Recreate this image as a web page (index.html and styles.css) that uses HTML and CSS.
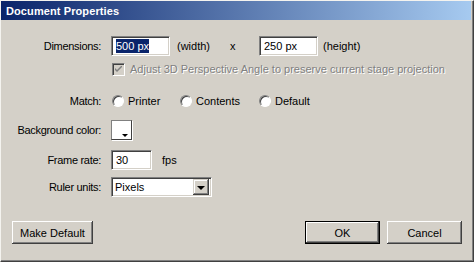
FILE: index.html
```html
<!DOCTYPE html>
<html>
<head>
    <title>Document Properties</title>
    <meta name="viewport" content="width=device-width, initial-scale=1">
    <link rel="stylesheet" href="styles.css">
</head>
<body>

<div class="window">
    <div class="titlebar">
        <span class="title">Document Properties</span>
    </div>

    <div class="content">
        <div class="row row-dim">
            <span class="label">Dimensions:</span>
            <div class="field field-dim"><span class="selected">500 px</span></div>
            <span class="note note-width">(width)</span>
            <span class="times">x</span>
            <div class="field field-dim">250 px</div>
            <span class="note note-height">(height)</span>
        </div>

        <div class="row row-check">
            <span class="label"></span>
            <span class="checkbox">
                <svg width="7" height="7" viewBox="0 0 7 7">
                    <path d="M0 2 L0 4 L2 6 L7 1 L7 -1 L2 4 Z" fill="#808080"/>
                </svg>
            </span>
            <span class="disabled">Adjust 3D Perspective Angle to preserve current stage projection</span>
        </div>

        <div class="row row-match">
            <span class="label">Match:</span>
            <span class="option option-printer"><span class="radio"></span>Printer</span>
            <span class="option option-contents"><span class="radio"></span>Contents</span>
            <span class="option"><span class="radio"></span>Default</span>
        </div>

        <div class="row row-bg">
            <span class="label">Background color:</span>
            <span class="swatch"><span class="swatch-arrow"></span></span>
        </div>

        <div class="row row-fps">
            <span class="label">Frame rate:</span>
            <div class="field field-fps">30</div>
            <span class="note note-fps">fps</span>
        </div>

        <div class="row row-ruler">
            <span class="label">Ruler units:</span>
            <div class="field select">
                <span class="select-text">Pixels</span>
                <span class="select-button"><span class="arrow"></span></span>
            </div>
        </div>
    </div>

    <div class="buttons">
        <button class="button button-wide">Make Default</button>
        <span class="spacer"></span>
        <span class="default-ring"><button class="button">OK</button></span>
        <button class="button">Cancel</button>
    </div>
</div>

</body>
</html>
```

FILE: styles.css
```css
html, body {
    margin: 0px;
    padding: 0px;
    background-color: #d4d0c8;
}

body {
    font-family: "Liberation Sans", Arial, sans-serif;
    font-size: 11px;
    color: #000000;
}

.window {
    width: 474px;
    height: 262px;
    box-sizing: border-box;
    border-top: 1px solid #f4f3ef;
    border-left: 1px solid #f4f3ef;
    border-right: 1px solid #404040;
    border-bottom: 1px solid #404040;
    box-shadow: inset -1px -1px 0px #808080;
    padding: 0px 2px 2px 0px;
    display: flex;
    flex-direction: column;
}

.titlebar {
    height: 19px;
    background: linear-gradient(to right, #0a246a, #a6caf0);
    display: flex;
    align-items: center;
    padding-left: 5px;
}

.title {
    color: #ffffff;
    font-weight: bold;
    font-size: 11px;
    letter-spacing: 0.1px;
}

.content {
    display: flex;
    flex-direction: column;
    flex: 1;
}

.row {
    display: flex;
    align-items: center;
}

.label {
    width: 100px;
    margin-right: 10px;
    text-align: right;
    letter-spacing: -0.3px;
    flex-shrink: 0;
}

.row-dim   { margin-top: 16px; height: 20px; }
.row-check { margin-top: 6px;  height: 14px; }
.row-match { margin-top: 18px; height: 14px; }
.row-bg    { margin-top: 12px; height: 20px; }
.row-fps   { margin-top: 10px; height: 20px; }
.row-ruler { margin-top: 7px;  height: 20px; }

/* sunken text fields */
.field {
    box-sizing: border-box;
    height: 20px;
    background-color: #ffffff;
    border: 1px solid;
    border-color: #808080 #ffffff #ffffff #808080;
    box-shadow: inset 1px 1px 0px #404040, inset -1px -1px 0px #d4d0c8;
    padding: 0px 4px;
    display: flex;
    align-items: center;
}

.field-dim {
    width: 59px;
}

.field-fps {
    width: 41px;
}

.selected {
    background-color: #0a246a;
    color: #ffffff;
    padding: 1px 0px;
}

.note-width {
    margin-left: 7px;
    width: 53px;
}

.times {
    width: 29px;
}

.note-height {
    margin-left: 5px;
}

.note-fps {
    margin-left: 10px;
}

.checkbox {
    box-sizing: border-box;
    width: 13px;
    height: 13px;
    margin-left: 1px;
    border: 1px solid;
    border-color: #808080 #ffffff #ffffff #808080;
    box-shadow: inset 1px 1px 0px #404040, inset -1px -1px 0px #d4d0c8;
    background-color: #d4d0c8;
    display: flex;
    align-items: center;
    justify-content: center;
}

.disabled {
    margin-left: 5px;
    color: #808080;
    text-shadow: 1px 1px 0px #ffffff;
}

.option {
    display: flex;
    align-items: center;
}

.option-printer  { width: 68px; }
.option-contents { width: 79px; }

.radio {
    box-sizing: border-box;
    width: 12px;
    height: 12px;
    margin-left: 1px;
    margin-right: 4px;
    border-radius: 50%;
    background-color: #ffffff;
    border: 1px solid;
    border-color: #808080 #ffffff #ffffff #808080;
    box-shadow: inset 1px 1px 0px #404040;
}

.swatch {
    box-sizing: border-box;
    width: 21px;
    height: 20px;
    border: 1px solid #808080;
    border-right-color: #404040;
    border-bottom-color: #404040;
    box-shadow: 1px 1px 0px #ffffff, inset 1px 1px 0px #ffffff;
    background-color: #ffffff;
    display: flex;
    justify-content: flex-end;
    align-items: flex-end;
}

.swatch-arrow {
    width: 0px;
    height: 0px;
    margin: 0px 3px 2px 0px;
    border-left: 3px solid transparent;
    border-right: 3px solid transparent;
    border-top: 3px solid #000000;
}

.select {
    width: 101px;
    padding: 0px 2px 0px 3px;
    justify-content: space-between;
}

.select-button {
    box-sizing: border-box;
    width: 16px;
    height: 16px;
    background-color: #d4d0c8;
    box-shadow: inset -1px -1px 0px #404040, inset 1px 1px 0px #d4d0c8,
                inset -2px -2px 0px #808080, inset 2px 2px 0px #ffffff;
    display: flex;
    align-items: center;
    justify-content: center;
}

.arrow {
    width: 0px;
    height: 0px;
    border-left: 4px solid transparent;
    border-right: 4px solid transparent;
    border-top: 4px solid #000000;
    margin-top: 1px;
}

.buttons {
    display: flex;
    align-items: center;
    padding: 0px 9px 15px 11px;
}

.spacer {
    flex: 1;
}

.button {
    box-sizing: border-box;
    width: 75px;
    height: 23px;
    margin: 0px;
    border: none;
    background-color: #d4d0c8;
    box-shadow: inset -1px -1px 0px #404040, inset 1px 1px 0px #ffffff,
                inset -2px -2px 0px #808080, inset 2px 2px 0px #d4d0c8;
    font-family: "Liberation Sans", Arial, sans-serif;
    font-size: 11px;
    color: #000000;
    padding: 0px;
}

.button-wide {
    width: 81px;
}

.default-ring {
    display: flex;
    border: 1px solid #000000;
    margin-right: 7px;
}

.default-ring .button {
    width: 73px;
    height: 21px;
}
```
